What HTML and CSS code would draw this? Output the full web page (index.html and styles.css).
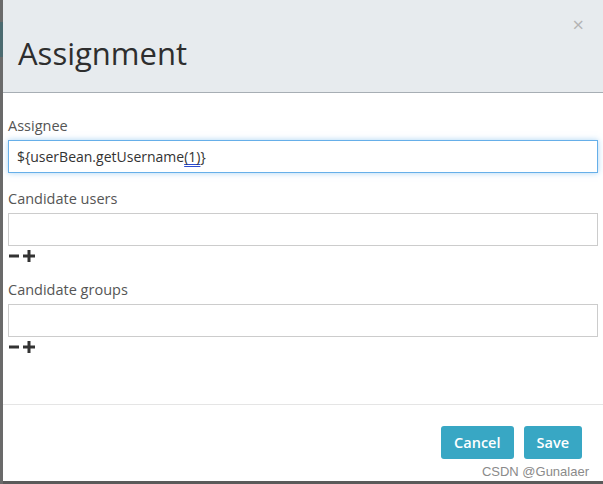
FILE: index.html
```html
<!DOCTYPE html>
<html>
<head>
<meta charset="utf-8">
<link rel="stylesheet" href="styles.css">
</head>
<body>
<div class="modal">
  <div class="modal-header">
    <h1 class="title">Assignment</h1>
    <span class="close">×</span>
  </div>
  <div class="modal-body">
    <div class="field">
      <label class="label">Assignee</label>
      <div class="input focused">${userBean.getUsername<span class="ime">(1)</span>}</div>
    </div>
    <div class="field">
      <label class="label">Candidate users</label>
      <div class="input"></div>
      <div class="actions">
        <svg class="icon" width="11" height="12" viewBox="0 0 11 12"><rect x="0" y="4.5" width="10" height="3" fill="#333"/></svg>
        <svg class="icon" width="12" height="12" viewBox="0 0 12 12"><rect x="0" y="4.5" width="12" height="3" fill="#333"/><rect x="4.5" y="0" width="3" height="12" fill="#333"/></svg>
      </div>
    </div>
    <div class="field">
      <label class="label">Candidate groups</label>
      <div class="input"></div>
      <div class="actions">
        <svg class="icon" width="11" height="12" viewBox="0 0 11 12"><rect x="0" y="4.5" width="10" height="3" fill="#333"/></svg>
        <svg class="icon" width="12" height="12" viewBox="0 0 12 12"><rect x="0" y="4.5" width="12" height="3" fill="#333"/><rect x="4.5" y="0" width="3" height="12" fill="#333"/></svg>
      </div>
    </div>
  </div>
  <div class="modal-footer">
    <button class="btn">Cancel</button>
    <button class="btn">Save</button>
    <span class="watermark">CSDN @Gunalaer</span>
  </div>
</div>
</body>
</html>
```

FILE: styles.css
```css
html, body {
  margin: 0;
  padding: 0;
}
body {
  width: 603px;
  height: 484px;
  overflow: hidden;
  background: linear-gradient(to bottom, #6a6a6a 0, #6a6a6a 22px, #4b6a70 22px, #4b6a70 57px, #6a6a6a 57px) 0 0 / 3px 100% no-repeat, #5a5a5a;
  padding-left: 3px;
  box-sizing: border-box;
  font-family: "Open Sans", "Noto Sans", sans-serif;
}
.modal {
  width: 600px;
  height: 481px;
  background: #fff;
  display: flex;
  flex-direction: column;
  position: relative;
}
.modal-header {
  height: 93px;
  background: #e7ebee;
  border-bottom: 1px solid #a7aeb4;
  box-sizing: border-box;
  position: relative;
  display: flex;
  align-items: flex-end;
}
.title {
  margin: 0 0 19px 15px;
  font-size: 31px;
  font-weight: 400;
  color: #2e2e2e;
  line-height: 40px;
}
.close {
  position: absolute;
  right: 19px;
  top: 13px;
  font-size: 20px;
  color: #b4b4b4;
  line-height: 24px;
}
.modal-body {
  padding: 22px 5px 0 5px;
  height: 312px;
  box-sizing: border-box;
  border-bottom: 1px solid #e5e5e5;
}
.field {
  margin-bottom: 15px;
}
.label {
  display: block;
  font-size: 14.5px;
  color: #555;
  line-height: 21px;
  margin-bottom: 4px;
}
.input {
  height: 33px;
  border: 1px solid #ccc;
  box-sizing: border-box;
  font-size: 14px;
  color: #333;
  padding: 0 8px;
  line-height: 31px;
}
.input.focused {
  border-color: #66afe9;
  box-shadow: 0 0 6px rgba(102, 175, 233, 0.55);
}
.ime {
  text-decoration: underline double #2b4bd0;
  text-underline-offset: 2px;
}
.actions {
  display: flex;
  gap: 3px;
  padding: 4px 0 2px 1px;
  height: 12px;
  align-items: center;
}
.icon {
  display: block;
}
.modal-footer {
  flex: 1;
  display: flex;
  justify-content: flex-end;
  align-items: flex-start;
  gap: 10px;
  padding: 21px 21px 0 0;
  position: relative;
}
.btn {
  background: #38a7c4;
  color: #fff;
  border: none;
  border-radius: 3px;
  height: 33px;
  padding: 0 13px;
  font-family: "Open Sans", "Noto Sans", sans-serif;
  font-size: 14.5px;
  font-weight: 600;
}
.watermark {
  position: absolute;
  right: 14px;
  bottom: 2px;
  font-family: "Liberation Sans", Arial, sans-serif;
  font-size: 13px;
  color: #8a8a8a;
  background: rgba(255,255,255,0.6);
}
```
